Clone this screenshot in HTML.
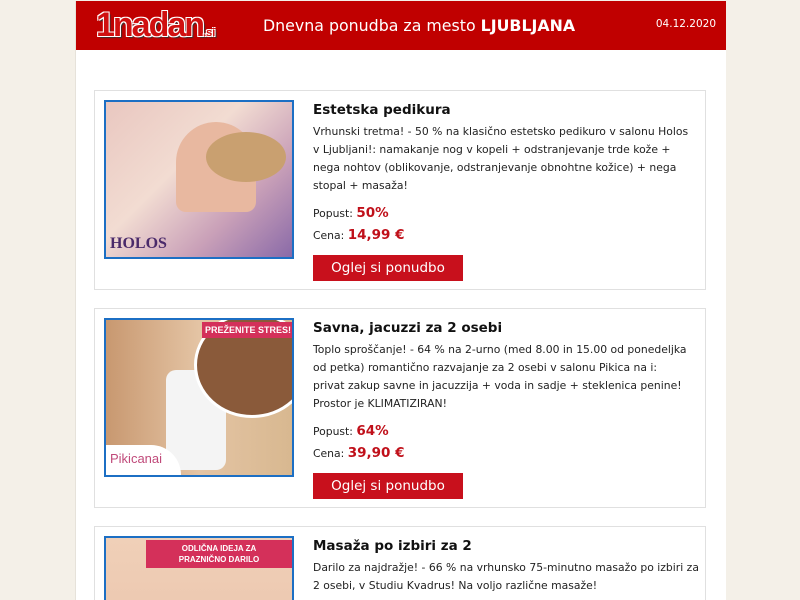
<!DOCTYPE html>
<html><head><meta charset="utf-8"><style>
html,body{margin:0;height:600px;overflow:hidden;}
body{background:#f4f0e8;font-family:"DejaVu Sans","Liberation Sans",sans-serif;}
.wrap{position:absolute;left:75px;top:1px;width:650px;height:599px;overflow:hidden;background:#fff;border-left:1px solid #e6e2da;}
.hdr{height:49px;background:#c00000;position:relative;color:#fff;}
.logo{position:absolute;left:20px;top:7px;font:bold 34px/34px "Liberation Sans",sans-serif;color:#d01010;letter-spacing:-2px;text-shadow:1px 1px 0 #fff,-1px -1px 0 #fff,1px -1px 0 #fff,-1px 1px 0 #fff,2px 2px 1px #333;}
.logo small{font-size:11px;letter-spacing:0;}
.title{position:absolute;left:187px;top:15px;font-size:15.8px;white-space:nowrap;}
.date{position:absolute;right:10px;top:17px;font-size:10.5px;}
.card{position:absolute;left:18px;width:610px;height:198px;border:1px solid #e0e0e0;background:#fff;}
.img{position:absolute;left:9px;top:9px;width:186px;height:155px;border:2px solid #1c6fc4;overflow:hidden;}
.txt{position:absolute;left:218px;top:9px;width:385px;font-size:10.8px;line-height:18px;color:#222;white-space:nowrap;}
.txt h2{margin:0 0 3px;font-size:13.5px;line-height:20px;color:#111;}
.red{color:#c0101a;font-weight:bold;font-size:13.5px;}
.p{height:22px;line-height:22px;}
.btn{margin-top:9px;width:150px;height:26px;background:#c8101c;color:#fff;font-size:13.5px;line-height:26px;text-align:center;}
</style></head><body>
<div class="wrap">
<div class="hdr"><div class="logo">1nadan<small>.si</small></div>
<div class="title">Dnevna ponudba za mesto <b>LJUBLJANA</b></div>
<div class="date">04.12.2020</div></div>

<div class="card" style="top:89px">
<div class="img" style="background:linear-gradient(135deg,#e9c7c0 0%,#f2dcd2 40%,#c9a0b8 70%,#8a6aa8 100%)">
<div style="position:absolute;left:70px;top:20px;width:80px;height:90px;background:#e8b8a0;border-radius:40px 40px 10px 10px"></div>
<div style="position:absolute;left:100px;top:30px;width:80px;height:50px;background:#c9a070;border-radius:50%"></div>
<div style="position:absolute;left:4px;bottom:4px;font:bold 16px Liberation Serif,serif;color:#4a2a6a">HOLOS</div></div>
<div class="txt"><h2>Estetska pedikura</h2>
Vrhunski tretma! - 50 % na klasično estetsko pedikuro v salonu Holos<br>v Ljubljani!: namakanje nog v kopeli + odstranjevanje trde kože +<br>nega nohtov (oblikovanje, odstranjevanje obnohtne kožice) + nega<br>stopal + masaža!
<div class="p" style="margin-top:7px">Popust: <span class="red">50%</span></div>
<div class="p">Cena: <span class="red">14,99 €</span></div>
<div class="btn">Oglej si ponudbo</div></div></div>

<div class="card" style="top:307px">
<div class="img" style="background:linear-gradient(90deg,#c89870,#e4c4a4 50%,#d8b890)">
<div style="position:absolute;left:60px;top:50px;width:60px;height:100px;background:#f4f4f4;border-radius:10px"></div>
<div style="position:absolute;left:88px;top:-8px;width:110px;height:100px;background:#8a5a3a;border-radius:50%;border:3px solid #fff"></div>
<div style="position:absolute;left:96px;top:2px;width:92px;height:16px;background:#d4305a;color:#fff;font:bold 9px Liberation Sans,sans-serif;text-align:center;line-height:16px;white-space:nowrap">PREŽENITE STRES!</div>
<div style="position:absolute;left:0;bottom:0;width:75px;height:30px;background:#fff;border-radius:0 30px 0 0;color:#c04a7a;font:13px Liberation Sans,sans-serif;padding:6px 0 0 4px;box-sizing:border-box">Pikicanai</div></div>
<div class="txt"><h2>Savna, jacuzzi za 2 osebi</h2>
Toplo sproščanje! - 64 % na 2-urno (med 8.00 in 15.00 od ponedeljka<br>od petka) romantično razvajanje za 2 osebi v salonu Pikica na i:<br>privat zakup savne in jacuzzija + voda in sadje + steklenica penine!<br>Prostor je KLIMATIZIRAN!
<div class="p" style="margin-top:7px">Popust: <span class="red">64%</span></div>
<div class="p">Cena: <span class="red">39,90 €</span></div>
<div class="btn">Oglej si ponudbo</div></div></div>

<div class="card" style="top:525px;height:80px;overflow:hidden">
<div class="img" style="background:linear-gradient(180deg,#f0d0b8,#e8c0a8)">
<div style="position:absolute;left:40px;top:2px;width:146px;height:28px;background:#d4305a;color:#fff;font:bold 8px Liberation Sans,sans-serif;text-align:center;line-height:11px;padding-top:3px;box-sizing:border-box">ODLIČNA IDEJA ZA<br>PRAZNIČNO DARILO</div></div>
<div class="txt"><h2>Masaža po izbiri za 2</h2>
Darilo za najdražje! - 66 % na vrhunsko 75-minutno masažo po izbiri za<br>2 osebi, v Studiu Kvadrus! Na voljo različne masaže!</div></div>
</div>
</body></html>
